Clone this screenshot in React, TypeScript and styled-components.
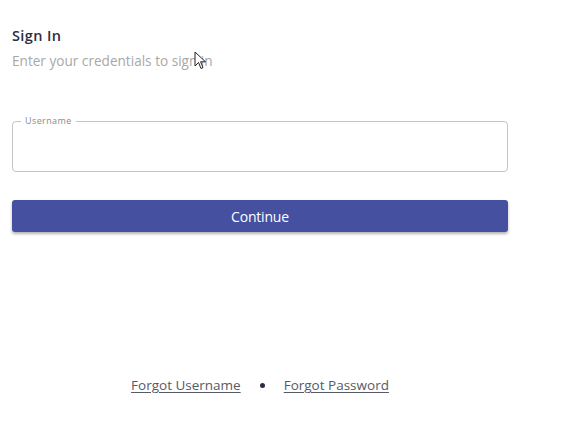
import React from "react";
import styled, { createGlobalStyle } from "styled-components";

const GlobalStyle = createGlobalStyle`
  html, body {
    margin: 0;
    padding: 0;
    background: #ffffff;
    font-family: "Open Sans", "Noto Sans", sans-serif;
  }
`;

const Page = styled.div`
  position: relative;
  width: 566px;
  height: 435px;
  overflow: hidden;
`;

const Form = styled.div`
  width: 496px;
  margin-left: 12px;
  padding-top: 26px;
  display: flex;
  flex-direction: column;
`;

const Title = styled.h1`
  margin: 0;
  font-size: 14.5px;
  font-weight: 600;
  color: #2b2d42;
  letter-spacing: 0.4px;
  line-height: 20px;
`;

const Subtitle = styled.p`
  margin: 6px 0 0;
  font-size: 13.6px;
  color: #a8a8a8;
  line-height: 18px;
`;

const Field = styled.fieldset`
  margin: 46px 0 0;
  padding: 0 12px;
  height: 56px;
  box-sizing: border-box;
  border: 1px solid #c4c4c4;
  border-radius: 4px;
  display: flex;
  align-items: center;
`;

const Legend = styled.legend`
  font-size: 9px;
  color: #8a8a8a;
  padding: 0 4px;
  margin-left: -4px;
  line-height: 10px;
  letter-spacing: 0.4px;
`;

const Input = styled.input`
  border: none;
  outline: none;
  width: 100%;
  font-family: inherit;
  font-size: 14px;
  background: transparent;
  margin-top: -4px;
`;

const Button = styled.button`
  margin-top: 28px;
  height: 32px;
  border: none;
  border-radius: 3px;
  background: #4550a1;
  color: #ffffff;
  font-family: inherit;
  font-size: 14px;
  letter-spacing: -0.2px;
  box-shadow: 0 2px 3px rgba(0, 0, 0, 0.3);
  cursor: pointer;
`;

const Footer = styled.div`
  margin-top: 144px;
  display: flex;
  justify-content: center;
  align-items: center;
  gap: 19px;
  font-size: 13.5px;
  color: #555a66;
`;

const Link = styled.a`
  color: #555a66;
  text-decoration: underline;
  text-underline-offset: 2px;
  text-decoration-thickness: 1px;
`;

const Dot = styled.span`
  width: 5px;
  height: 5px;
  border-radius: 50%;
  background: #2b2d42;
`;

const Cursor = styled.svg`
  position: absolute;
  left: 194px;
  top: 51px;
`;

export default function App() {
  return (
    <Page>
      <GlobalStyle />
      <Form>
        <Title>Sign In</Title>
        <Subtitle>Enter your credentials to sign in</Subtitle>
        <Field>
          <Legend>Username</Legend>
          <Input />
        </Field>
        <Button>Continue</Button>
        <Footer>
          <Link>Forgot Username</Link>
          <Dot />
          <Link>Forgot Password</Link>
        </Footer>
      </Form>
      <Cursor width="14" height="20" viewBox="0 0 14 20">
        <path
          d="M1 1 L1 15 L4.5 11.5 L7 17.5 L9 16.6 L6.6 10.8 L11.5 10.8 Z"
          fill="#ffffff"
          stroke="#222"
          strokeWidth="1"
          strokeLinejoin="round"
        />
      </Cursor>
    </Page>
  );
}
